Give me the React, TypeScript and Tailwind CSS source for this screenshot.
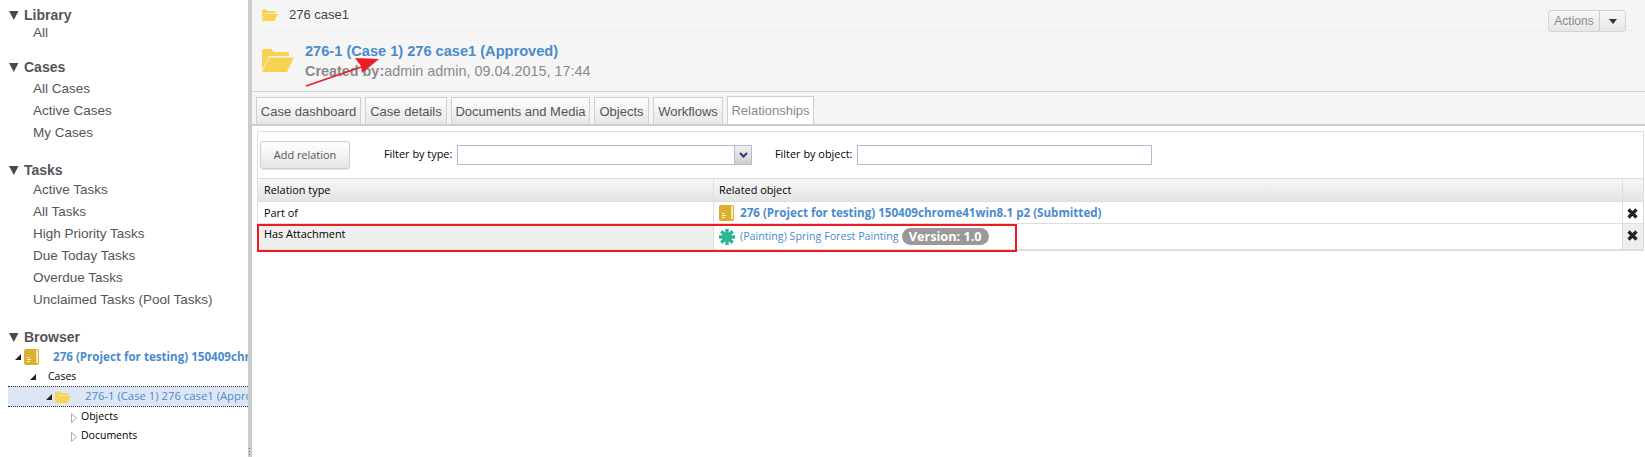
import type { ReactNode } from "react";

const sections = [
  { title: "Library", items: ["All"], head: "h-[18px]", list: "", row: "h-[17px]" },
  { title: "Cases", items: ["All Cases", "Active Cases", "My Cases"], head: "h-[18px]", list: "pt-[2px]", row: "h-[22px]" },
  {
    title: "Tasks",
    items: ["Active Tasks", "All Tasks", "High Priority Tasks", "Due Today Tasks", "Overdue Tasks", "Unclaimed Tasks (Pool Tasks)"],
    head: "h-[18px]",
    list: "",
    row: "h-[22px]",
  },
];

function Caret() {
  return (
    <svg width="10" height="10" viewBox="0 0 10 10" className="shrink-0">
      <path d="M0 1h9.5L4.8 10z" fill="#4a4a4a" />
    </svg>
  );
}

function TreeOpen({ className }: { className: string }) {
  return (
    <svg width="6" height="6" viewBox="0 0 6 6" className={className}>
      <path d="M6 0v6H0z" fill="#222" />
    </svg>
  );
}

function TreeClosed() {
  return (
    <svg width="6" height="10" viewBox="0 0 6 10" className="ml-[62px] mt-[3px] shrink-0">
      <path d="M.5 .5 5.5 5 .5 9.5z" fill="#fff" stroke="#aaa" />
    </svg>
  );
}

function FolderOpen({ w, h, className }: { w: number; h: number; className?: string }) {
  return (
    <svg width={w} height={h} viewBox="0 0 32 24" className={className}>
      <path d="M0 3a2 2 0 0 1 2-2h7l3 3h13a2 2 0 0 1 2 2v2H7L0 22z" fill="#f8d352" />
      <path d="M7 9.5h25L25 24H0z" fill="#f8d352" />
    </svg>
  );
}

function ProjectIcon({ w, h, className }: { w: number; h: number; className?: string }) {
  return (
    <svg width={w} height={h} viewBox="0 0 15 16" className={className}>
      <path d="M2 0h11a2 2 0 0 1 2 2v12a2 2 0 0 1-2 2H2a2 2 0 0 1-2-2V2a2 2 0 0 1 2-2z" fill="#dcaf32" />
      <path d="M12.2 1H13a1 1 0 0 1 1 1v11a1 1 0 0 1-1 1h-.8z" fill="#fff3c4" />
      <path d="M3 8h2.5v1H3zm0 2h4v1H3zm0 2h3v1H3z" fill="#fff3c4" />
    </svg>
  );
}

function Asterisk() {
  return (
    <svg width="16" height="16" viewBox="0 0 16 16" className="shrink-0">
      <g stroke="#2bb594" strokeWidth="3.4">
        <path d="M8 0v16M0 8h16M2.3 2.3l11.4 11.4M13.7 2.3 2.3 13.7" />
      </g>
    </svg>
  );
}

function Tab({ children, active, className }: { children: ReactNode; active?: boolean; className: string }) {
  return (
    <div
      className={`flex items-center justify-center whitespace-nowrap border border-b-0 border-[#cfcfcf] pt-[1px] text-[13px] ${className} ${
        active ? "h-[28px] bg-white text-[#8a8a8a]" : "h-[27px] bg-gradient-to-b from-white to-[#e6e6e6] text-[#555]"
      }`}
    >
      {children}
    </div>
  );
}

function RemoveIcon() {
  return (
    <svg width="11" height="11" viewBox="0 0 11 11">
      <path d="M1.5 1.5l8 8M9.5 1.5l-8 8" stroke="#222" strokeWidth="3.2" />
    </svg>
  );
}

export default function App() {
  return (
    <div className="relative flex h-[457px] w-[1645px] overflow-hidden bg-white font-['Liberation_Sans',sans-serif]">
      {/* left navigation */}
      <aside className="w-[248px] shrink-0 overflow-hidden pl-[9px] pt-[6px]">
        {sections.map((s) => (
          <section key={s.title} className="mb-[17px]">
            <div className={`flex items-center gap-[5px] text-[14px] font-bold leading-none text-[#555] ${s.head}`}>
              <Caret />
              {s.title}
            </div>
            <ul className={`pl-[24px] text-[13.5px] leading-none text-[#555] ${s.list}`}>
              {s.items.map((i) => (
                <li key={i} className={`flex items-center ${s.row}`}>
                  {i}
                </li>
              ))}
            </ul>
          </section>
        ))}

        <div className="flex h-[18px] items-center gap-[5px] text-[14px] font-bold leading-none text-[#555]">
          <Caret />
          Browser
        </div>
        <div className="pt-[1px] font-['Open_Sans',sans-serif] text-[10.5px] text-black">
          <div className="flex h-[20px] items-center whitespace-nowrap">
            <TreeOpen className="ml-[6px] shrink-0" />
            <ProjectIcon w={15} h={16} className="ml-[3px] shrink-0" />
            <span className="ml-[14px] text-[11.6px] font-bold text-[#4a8ccb]">276 (Project for testing) 150409chrome41win8.1 p2 (Submitted)</span>
          </div>
          <div className="flex h-[19px] items-center">
            <TreeOpen className="ml-[21px] shrink-0" />
            <span className="ml-[12px]">Cases</span>
          </div>
          <div className="-ml-[1px] flex h-[21px] items-center whitespace-nowrap border-y border-dotted border-[#333] bg-[#dde6f5]">
            <TreeOpen className="ml-[38px] shrink-0" />
            <FolderOpen w={16} h={12} className="ml-[3px] shrink-0" />
            <span className="ml-[14px] text-[11.3px] text-[#4a8ccb]">276-1 (Case 1) 276 case1 (Approved)</span>
          </div>
          <div className="flex h-[19px] items-center">
            <TreeClosed />
            <span className="ml-[4px]">Objects</span>
          </div>
          <div className="flex h-[19px] items-center">
            <TreeClosed />
            <span className="ml-[4px]">Documents</span>
          </div>
        </div>
      </aside>

      {/* splitter */}
      <div className="relative w-[4px] shrink-0 bg-[#cccccc]">
        <div className="absolute bottom-0 left-0 h-[10px] w-[4px] bg-[radial-gradient(#666_1px,transparent_1px)] bg-[length:3px_3px]" />
      </div>

      {/* main */}
      <main className="min-w-0 flex-1">
        <header className="h-[92px] border-b border-[#d4d4d4] bg-[#f5f5f5] px-[10px]">
          <div className="flex h-[31px] items-center border-b border-[#ececec] pr-[134px]">
            <FolderOpen w={16} h={12} />
            <span className="ml-[11px] text-[13px] text-[#444]">276 case1</span>
          </div>
          <div className="mt-[11px] flex items-start">
            <FolderOpen w={32} h={24} className="mt-[6px]" />
            <div className="ml-[11px]">
              <div className="text-[14.6px] font-bold leading-[19px] text-[#4a8ccb]">276-1 (Case 1) 276 case1 (Approved)</div>
              <div className="text-[14.4px] leading-[21px] text-[#8a8a8a]">
                <b>Created by:</b>admin admin, 09.04.2015, 17:44
              </div>
            </div>
          </div>
        </header>

        <nav className="flex h-[34px] items-end gap-[4px] border-b-2 border-[#cfcfcf] bg-[#f5f5f5] pl-[4px]">
          <Tab className="w-[105px]">Case dashboard</Tab>
          <Tab className="w-[82px]">Case details</Tab>
          <Tab className="w-[139px]">Documents and Media</Tab>
          <Tab className="w-[55px]">Objects</Tab>
          <Tab className="w-[70px]">Workflows</Tab>
          <Tab active className="w-[87px]">
            Relationships
          </Tab>
        </nav>

        <section className="ml-[5px] mr-[1px] mt-[5px] border-l border-r border-t border-[#dddddd] font-['Open_Sans',sans-serif] text-[10.9px] text-black">
          <div className="flex h-[46px] items-start pl-[2px] pt-[9px]">
            <button className="h-[28px] w-[90px] rounded-[3px] border border-[#cfcfcf] bg-gradient-to-b from-white to-[#e6e6e6] text-[#555] shadow-[0_1px_1px_rgba(0,0,0,0.1)]">
              Add relation
            </button>
            <span className="ml-[34px] mt-[5px] w-[73px]">Filter by type:</span>
            <div className="mt-[4px] flex h-[20px] w-[295px] border border-[#b4bad2] bg-white">
              <div className="flex-1" />
              <div className="flex w-[17px] items-center justify-center border-l border-[#b4bad2] bg-gradient-to-b from-[#f2f2f2] to-[#cfcfcf]">
                <svg width="9" height="6" viewBox="0 0 9 6">
                  <path d="M1 1l3.5 3.5L8 1" fill="none" stroke="#1d3f78" strokeWidth="2" />
                </svg>
              </div>
            </div>
            <span className="ml-[23px] mt-[5px] w-[82px]">Filter by object:</span>
            <div className="mt-[4px] h-[20px] w-[295px] border border-[#b4bad2] bg-white" />
          </div>

          <div className="grid grid-cols-[456px_909px_1fr]">
            <div className="flex h-[24px] items-center border-y border-r border-[#dddddd] bg-gradient-to-b from-[#f7f7f7] to-[#e4e4e4] pl-[6px]">Relation type</div>
            <div className="flex h-[24px] items-center border-y border-r border-[#dddddd] bg-gradient-to-b from-[#f7f7f7] to-[#e4e4e4] pl-[5px]">Related object</div>
            <div className="h-[24px] border-y border-[#dddddd] bg-gradient-to-b from-[#f7f7f7] to-[#e4e4e4]" />

            <div className="flex h-[22px] items-center border-b border-r border-[#dddddd] pl-[6px] pt-[1px]">Part of</div>
            <div className="flex h-[22px] items-center border-b border-r border-[#dddddd] pl-[5px] pt-[1px]">
              <ProjectIcon w={15} h={16} className="shrink-0" />
              <span className="ml-[6px] text-[11.6px] font-bold text-[#4a8ccb]">276 (Project for testing) 150409chrome41win8.1 p2 (Submitted)</span>
            </div>
            <div className="flex h-[22px] items-center justify-center border-b border-[#dddddd] pr-[2px] pt-[1px]">
              <RemoveIcon />
            </div>

            <div className="h-[27px] border-b-2 border-r border-[#dddddd] bg-[#eeeeee] pl-[6px] pt-[2px]">Has Attachment</div>
            <div className="flex h-[27px] items-center border-b-2 border-r border-[#dddddd] pl-[5px]">
              <Asterisk />
              <span className="ml-[5px] text-[10.7px] text-[#4a8ccb]">(Painting) Spring Forest Painting</span>
              <span className="ml-[3px] flex h-[17px] items-center rounded-full bg-[#999999] px-[7px] text-[12.7px] font-bold text-white">Version: 1.0</span>
            </div>
            <div className="flex h-[27px] items-center justify-center border-b-2 border-[#dddddd] bg-[#eeeeee] pb-[3px] pr-[2px]">
              <RemoveIcon />
            </div>
          </div>
        </section>

        <div className="absolute left-[1548px] top-[10px] flex h-[22px] rounded-[3px] border border-[#d4d4d4] bg-gradient-to-b from-[#f8f8f8] to-[#e6e6e6] text-[12px] text-[#8a8a8a]">
          <span className="flex w-[51px] items-center justify-center border-r border-[#cccccc]">Actions</span>
          <span className="flex w-[25px] items-center justify-center">
            <svg width="8" height="5" viewBox="0 0 8 5">
              <path d="M0 0h8L4 5z" fill="#333" />
            </svg>
          </span>
        </div>
      </main>

      {/* annotations laid over the screenshot */}
      <div className="pointer-events-none absolute left-[257px] top-[224px] h-[28px] w-[760px] border-2 border-[#ed1c24]" />
      <svg className="pointer-events-none absolute left-[300px] top-[52px]" width="90" height="40" viewBox="0 0 90 40">
        <path d="M6 34 64 14" stroke="#ed1c24" strokeWidth="1.6" />
        <path d="M79 7 55 6l6 8 1 7z" fill="#ed1c24" />
      </svg>
    </div>
  );
}
